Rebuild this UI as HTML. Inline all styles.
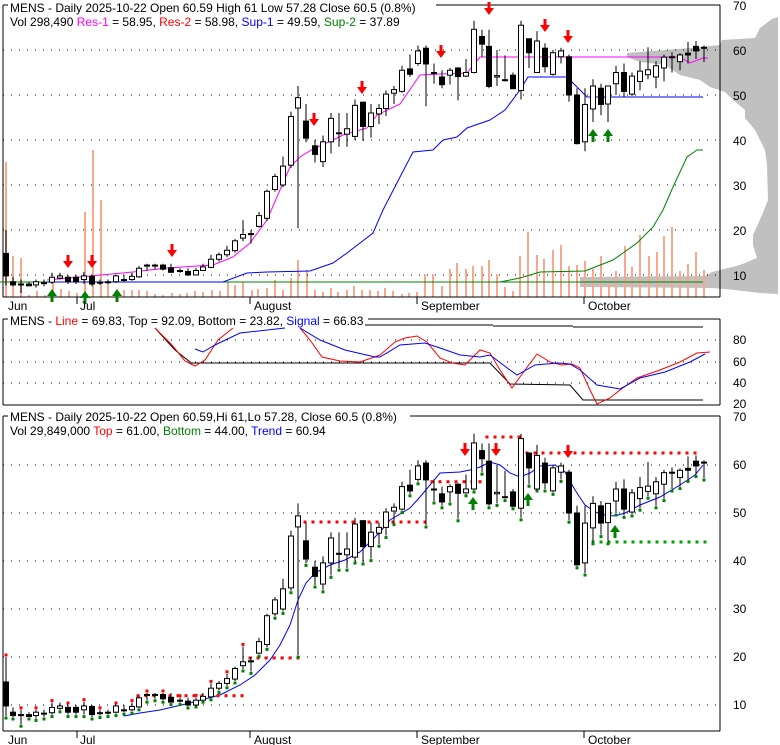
<!DOCTYPE html>
<html><head><meta charset="utf-8"><style>
html,body{margin:0;padding:0;background:#fff;width:780px;height:745px;overflow:hidden}
svg{display:block}
text{font-family:"Liberation Sans",Arial,sans-serif;font-size:12px}
</style></head><body>
<svg id="s" width="780" height="745" xmlns="http://www.w3.org/2000/svg">
<polygon fill="#c0c0c0" points="778,17 772,19 760,28 755,38 722,40 720,45 690,48 627,53 627,57 640,62 665,65 680,75 700,80 710,87 725,92 733,100 745,110 745,118 755,130 765,150 767,165 768,200 762,215 753,235 753,245 757,258 740,265 712,272 705,276 580,277 580,287 712,288 735,290 760,293 778,294"/>
<g id="g"></g>
<text x="10" y="12">MENS - Daily 2025-10-22 Open 60.59  High 61  Low 57.28  Close 60.5 (0.8%)</text>
<text x="10" y="26">Vol 298,490 <tspan fill="#ff00ff">Res-1</tspan> = 58.95, <tspan fill="#ff0000">Res-2</tspan> = 58.98, <tspan fill="#0000ff">Sup-1</tspan> = 49.59, <tspan fill="#008000">Sup-2</tspan> = 37.89</text>
<text x="10" y="325">MENS - <tspan fill="#ff0000">Line</tspan> = 69.83, Top = 92.09, Bottom = 23.82, <tspan fill="#0000ff">Signal</tspan> = 66.83</text>
<text x="10" y="421">MENS - Daily 2025-10-22 Open 60.59,Hi 61,Lo 57.28, Close 60.5 (0.8%)</text>
<text x="10" y="435">Vol 29,849,000 <tspan fill="#ff0000">Top</tspan> = 61.00, <tspan fill="#008000">Bottom</tspan> = 44.00, <tspan fill="#0000ff">Trend</tspan> = 60.94</text>
<g>
<text x="8" y="310">Jun</text><text x="80" y="310">Jul</text><text x="254" y="310">August</text><text x="421" y="310">September</text><text x="588" y="310">October</text>
<text x="8" y="744">Jun</text><text x="80" y="744">Jul</text><text x="254" y="744">August</text><text x="421" y="744">September</text><text x="588" y="744">October</text>
<text x="733" y="10">70</text><text x="733" y="55">60</text><text x="733" y="100">50</text><text x="733" y="145">40</text><text x="733" y="190">30</text><text x="733" y="235">20</text><text x="733" y="280">10</text>
<text x="733" y="344">80</text><text x="733" y="366">60</text><text x="733" y="387">40</text><text x="733" y="408">20</text>
<text x="733" y="421">70</text><text x="733" y="469">60</text><text x="733" y="517">50</text><text x="733" y="565">40</text><text x="733" y="613">30</text><text x="733" y="661">20</text><text x="733" y="709">10</text>
</g>
</svg>
<script>
var NS="http://www.w3.org/2000/svg",G=document.getElementById("g");
function el(t,a){var e=document.createElementNS(NS,t);for(var k in a)e.setAttribute(k,a[k]);G.appendChild(e);return e;}
function line(x1,y1,x2,y2,c,w,d){var a={x1:x1,y1:y1,x2:x2,y2:y2,stroke:c,"stroke-width":w||1};if(d)a["stroke-dasharray"]=d;el("line",a);}
function pl(pts,c,w,d){var a={points:pts,fill:"none",stroke:c,"stroke-width":w||1};if(d)a["stroke-dasharray"]=d;el("polyline",a);}
var C=[[6,14.8,9.8,20,7.7],[13,8.5,7.8,9.5,7.5],[21,8,8,9,6],[29,8,7.6,8.5,7.5],[36,7.8,8.5,9,7.2],[44,8.2,8.3,9,7.5],[52,8.4,9.5,10.5,8],[60,9.3,9.8,10.5,9],[68,9.5,8.5,10,8],[76,9.5,8.5,10,8],[84,9,9.8,10.7,8],[92,9.7,8,10,7.5],[100,8.4,8.3,9,7.8],[108,8.3,8.5,9,8],[116,8.5,9.8,10,8.2],[124,8.8,9,10,8.5],[132,9,9.7,10.5,8.7],[139,9.6,11.5,12,9.4],[147,12,12.2,12.5,11],[155,12.2,12,12.5,11.3],[163,12.2,11.3,12.5,11],[171,11.6,10.6,12.5,10.5],[180,11,11,11.5,10.5],[188,10.8,10,11.5,9.8],[196,10,11,11.6,10],[203,11,11.8,12.5,11],[211,11.7,13.5,14.5,11.5],[219,13.5,14.5,15,13],[227,14.5,15.5,16.5,14],[235,15.4,17.6,18,15],[243,18.2,19,22.2,17.5],[251,19,19.2,20,17],[259,20.8,23.2,24,20.5],[267,22.6,28.6,29,22],[275,29,31.9,32.5,28.5],[283,30,34.2,36.3,29.5],[291,34.4,45.2,46.3,33.8],[298,47.1,49.4,52,20.4],[306,44.2,40.4,48,39.5],[315,38.7,36.8,40,35],[323,35.2,39.6,41,34],[331,39.6,44.8,46,37],[339,41.6,41.4,46,38.5],[347,41.3,42.5,46,38.5],[355,40.8,47.7,49,40],[363,48.4,43,48.5,39.8],[371,43,46,48,40.5],[379,45.8,47,48,43.5],[386,47,50.2,51,45.3],[394,50.4,51.2,52,48],[402,50.8,55.5,56.5,50.5],[410,55.8,54.6,59,54],[418,57,59.8,61,56.5],[426,60.4,56.9,61,47.5],[434,55,55,57,52.5],[442,54,52.3,55.5,51.5],[450,54.4,55.5,56,52.3],[458,56,54.1,56.2,48.8],[466,54.2,55,58,54],[474,55,64.6,66.5,54.8],[482,63,61.3,64.5,58.5],[489,60.8,51.9,64.5,51.5],[497,54,54.3,60,52],[505,53.4,53.4,58.8,53],[513,54.4,51.4,55,51.3],[521,51,65.5,66.5,49],[529,62.5,59.4,62.5,56],[537,55,62,64.2,55],[545,60.4,56.3,61.5,55],[553,54.6,59.4,60,54.3],[561,58.5,59.8,60.5,57],[569,58.5,50,59,48.5],[577,50,39.2,51.5,39],[585,39.6,47.9,51.5,37.5],[593,46.9,52,53.5,44],[601,51.5,47.9,52.5,45.5],[608,48,52,52,44],[616,52.5,55,56.5,50],[624,55,50.8,57,49.5],[632,50.2,54.2,55,49.8],[640,53,55.3,57.5,51],[648,54.5,55.6,60.6,53.5],[656,54,56.5,57.5,51.5],[664,56,58.4,59,53],[672,58.5,58.5,59.5,55],[680,57.4,58.9,59.3,55.5],[688,59.3,58.9,61.8,57],[696,60.8,59.8,62,58],[704,60.6,60.5,61,57.3]];
var V={6:162,13:256,21:258,29:295,37:291,45:295,53:283,61:289,69:291,77:293,85:212,93:150,101:200,108:284,116:291,124:290,132:290,139:290,147:291,155:294,163:295,172:293,180:294,187:293,195:291,203:292,212:290,220:291,228:282,235:285,243:282,252:290,258:289,267:288,275:280,283:290,291:278,298:260,307:270,315:290,323:292,331:288,338:292,347:290,354:286,362:290,370:290,378:291,385:288,393:291,402:294,409:293,417:292,425:274,433:274,442:286,450:269,457:263,466:269,473:266,482:266,489:260,497:274,505:287,513:291,520:256,528:232,537:255,544:259,553:250,561:245,569:266,577:265,585:261,593:269,601:256,609:283,616:271,625:246,632:267,640:235,649:256,657:252,664:236,672:227,680:271,688:264,696:252,704:270};
for(var k in V){el("rect",{x:+k-1,y:V[k],width:2,height:297-V[k],fill:"#f8a98b"});}
function y1(p){return 5+(70-p)*4.5;} function y3(p){return 417+(70-p)*4.8;}
[60,50,40,30,20,10].forEach(function(p){line(3,y1(p),720,y1(p),"#000",1,"1,7");line(3,y3(p),720,y3(p),"#000",1,"1,7");});
[340,362,383].forEach(function(y){line(3,y,720,y,"#000",1,"1,7");});
line(3,5,3,297,"#000");line(3,297,720,297,"#000");line(720,5,720,297,"#000");line(3,5,8,5,"#000");line(436,5,720,5,"#000");
line(3,319,3,405,"#000");line(3,405,720,405,"#000");line(720,319,720,405,"#000");line(3,319,8,319,"#000");line(368,319,720,319,"#000");
line(3,416,3,731,"#000");line(3,731,720,731,"#000");line(720,416,720,731,"#000");line(3,416,8,416,"#000");line(410,416,720,416,"#000");
[77,250,417,584].forEach(function(x){line(x,297,x,304,"#000");line(x,731,x,738,"#000");});
pl("0,282 703,282","#008000");
pl("47,282 223,282 247,273 267,272 310,271 333,263 347,253 360,243 373,233 383,210 400,177 413,152 433,150 443,140 457,137 467,128 490,120 505,110 520,90 528,77 567,77 587,97 703,97","#0000ff");
pl("500,282 520,278 540,272 585,271 613,260 623,253 637,243 653,227 663,210 673,187 687,157 697,150 703,150","#008000");
pl("47,280 133,272 167,268 213,265 233,257 250,243 267,220 283,183 290,167 300,157 313,149 333,140 343,135 367,128 377,115 400,104 420,75 440,74 467,73 480,57 680,57 690,63 703,58 708,58","#ff00ff");
pl("155,328 175,350 190,362 190,363 490,363 510,384 570,385 583,400 703,400","#000");
line(365,325,493,325,"#000");line(493,326,573,326,"#000");line(573,327,703,327,"#000");
pl("155,328 172,345 185,361 195,366 205,360 218,340 233,328","#ff0000");
pl("300,328 310,340 322,357 340,361 360,362 380,355 395,342 405,338 417,336 427,342 440,358 452,363 465,365 480,350 490,353 500,370 512,388 525,370 537,354 550,362 562,365 572,364 580,368 590,390 597,404 610,398 620,390 637,378 660,370 680,362 697,353 710,352","#ff0000");
pl("195,349 203,352 215,345 240,333 285,328","#0000ff");
pl("300,328 320,340 345,350 375,357 380,357 400,345 425,343 440,348 460,355 480,357 490,355 510,370 517,375 535,365 558,363 570,364 580,370 597,385 620,389 640,378 665,372 690,362 705,354","#0000ff");
pl("124,716 140,713 160,710 190,703 220,695 240,685 255,675 270,660 280,645 290,625 298,600 306,583 315,573 330,565 345,560 360,552 380,532 390,520 410,508 420,497 440,473 460,472 470,470 480,467 490,462 500,465 510,473 520,477 530,473 540,466 555,465 565,472 575,490 585,505 595,512 605,515 615,516 625,513 640,505 660,497 680,485 695,475 703,465","#0000ff");
function dots(x1,x2,y,c){for(var x=x1;x<=x2;x+=8)el("rect",{x:x-1.5,y:y-1.5,width:3,height:3,fill:c});}
dots(138,245,695.7,"#ff0000");dots(250,298,658,"#ff0000");dots(305,395,522,"#ff0000");dots(393,425,522,"#ff0000");dots(432,480,481.7,"#ff0000");dots(487,520,437,"#ff0000");dots(527,697,453,"#ff0000");dots(593,705,542,"#00a000");
C.forEach(function(c,i){
 [[y1,0],[y3,1]].forEach(function(m){var f=m[0],x=c[0];
  line(x,f(c[3]),x,f(c[4]),"#000");
  var t=Math.min(f(c[1]),f(c[2])),b=Math.max(f(c[1]),f(c[2]));if(b-t<1)b=t+1;
  el("rect",{x:x-2.5,y:t,width:5,height:b-t,fill:c[2]<c[1]?"#000":"#fff",stroke:"#000","stroke-width":1});
  if(m[1]){el("rect",{x:x-1.5,y:f(c[4])+0.5,width:3,height:3,fill:"#008000"});if(i<32&&i%2==0)el("rect",{x:x-1.5,y:f(c[3])-3.5,width:3,height:3,fill:"#ff0000"});}
 });
});
function down(x,y){el("polygon",{points:(x-1.5)+","+y+" "+(x+1.5)+","+y+" "+(x+1.5)+","+(y+6)+" "+(x+5)+","+(y+6)+" "+x+","+(y+13)+" "+(x-5)+","+(y+6)+" "+(x-1.5)+","+(y+6),fill:"#ff0000"});}
function up(x,y){el("polygon",{points:(x-1.5)+","+(y+13)+" "+(x+1.5)+","+(y+13)+" "+(x+1.5)+","+(y+7)+" "+(x+5)+","+(y+7)+" "+x+","+y+" "+(x-5)+","+(y+7)+" "+(x-1.5)+","+(y+7),fill:"#008000"});}
[[68,255],[92,255],[172,244],[314,113],[362,81],[441,45],[489,2],[545,19],[568,30]].forEach(function(a){down(a[0],a[1]);});
[[52,289],[85,291],[117,289],[593,129],[608,129]].forEach(function(a){up(a[0],a[1]);});
[[465,443],[496,443],[568,445]].forEach(function(a){down(a[0],a[1]);});
[[473,497],[528,493],[615,525]].forEach(function(a){up(a[0],a[1]);});
</script>
</body></html>
